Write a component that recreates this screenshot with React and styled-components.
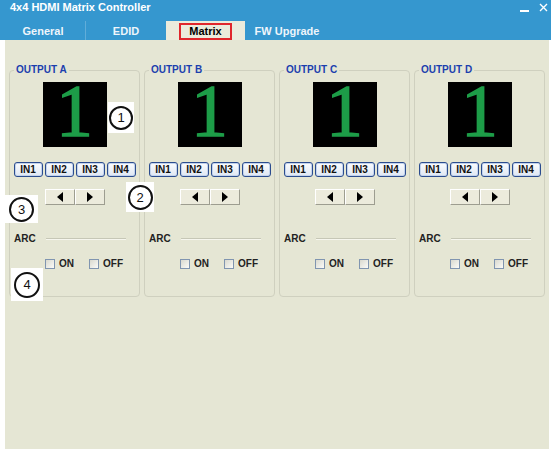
import React from 'react';
import styled, { createGlobalStyle } from 'styled-components';

const GlobalStyle = createGlobalStyle`
  html, body { margin: 0; padding: 0; background: #ffffff; }
  body { font-family: "Liberation Sans", Arial, sans-serif; }
  #root { width: 554px; height: 449px; overflow: hidden; }
`;

const Window = styled.div`
  position: relative;
  width: 551px;
  height: 449px;
  display: flex;
  flex-direction: column;
`;

const Header = styled.header`
  background: #3597cf;
  display: flex;
  flex-direction: column;
`;

const TitleRow = styled.div`
  height: 21px;
  display: flex;
  align-items: flex-start;
  justify-content: space-between;
  padding: 2px 3px 0 10px;
  box-sizing: border-box;
`;

const Title = styled.span`
  color: #ffffff;
  font-weight: bold;
  font-size: 11px;
  line-height: 11px;
`;

const Controls = styled.div`
  display: flex;
  align-items: flex-start;
  gap: 10px;
  padding-top: 1px;
`;

const TabBar = styled.nav`
  height: 19px;
  display: flex;
  align-items: stretch;
`;

const Tab = styled.div`
  width: ${p => p.$width}px;
  display: flex;
  align-items: center;
  justify-content: center;
  white-space: nowrap;
  font-weight: bold;
  font-size: 11px;
  color: ${p => (p.$active ? '#000000' : '#eef5fb')};
  background: ${p => (p.$active ? '#ebebdc' : 'transparent')};
  box-shadow: ${p => (p.$divider ? 'inset -1px 0 0 rgba(255,255,255,0.22)' : 'none')};
  padding-top: 2px;
  box-sizing: border-box;
`;

const TabLabel = styled.span`
  line-height: 11px;
  padding: ${p => (p.$marked ? '1px 8px' : '3px 0')};
  border: ${p => (p.$marked ? '2px solid #e0262c' : 'none')};
`;

const Body = styled.main`
  flex: 1;
  margin: 0 2px 0 5px;
  background: #e5e6d4;
  padding: 30px 0 0 4px;
  display: flex;
  align-items: flex-start;
  gap: 4px;
`;

const Group = styled.section`
  width: 131px;
  height: 227px;
  box-sizing: border-box;
  border: 1px solid #cfd0bf;
  border-radius: 4px;
  display: flex;
  flex-direction: column;
  align-items: center;
`;

const Legend = styled.span`
  align-self: flex-start;
  margin: -7px 0 0 4px;
  padding: 0 2px;
  background: #e5e6d4;
  color: #1c3fae;
  font-weight: bold;
  font-size: 10px;
  line-height: 12px;
`;

const Display = styled.div`
  margin-top: 6px;
  width: 64px;
  height: 65px;
  background: #000000;
  display: flex;
  align-items: center;
  justify-content: center;
  padding-bottom: 5px;
  box-sizing: border-box;
  color: #1d9d48;
  -webkit-text-stroke: 1.6px #1d9d48;
  font-family: "Liberation Serif", "Times New Roman", serif;
  font-size: 73px;
  line-height: 60px;
`;

const InputRow = styled.div`
  margin-top: 15px;
  display: flex;
  gap: 2px;
`;

const InputButton = styled.button`
  width: 29px;
  height: 15px;
  padding: 0;
  border: 1px solid #2b4c8e;
  border-radius: 3px;
  background: linear-gradient(#fbfcfe, #dfe7f3);
  box-shadow: inset 0 0 0 1px #c3d3ec;
  font-family: "Liberation Sans", Arial, sans-serif;
  font-weight: bold;
  font-size: 10px;
  line-height: 13px;
  color: #111111;
`;

const ArrowRow = styled.div`
  margin-top: 12px;
  display: flex;
`;

const ArrowButton = styled.button`
  width: 30px;
  height: 16px;
  padding: 0;
  border: 1px solid;
  border-color: #ffffff #9d9d90 #9d9d90 #ffffff;
  background: #ecebdc;
  display: flex;
  align-items: center;
  justify-content: center;
`;

const ArcRow = styled.div`
  align-self: stretch;
  margin-top: 27px;
  height: 12px;
  display: flex;
  align-items: center;
  padding: 0 13px 0 4px;
`;

const ArcLabel = styled.span`
  font-weight: bold;
  font-size: 10px;
  color: #222222;
`;

const Rule = styled.div`
  flex: 1;
  margin-left: 10px;
  height: 1px;
  background: #c6c7b6;
  box-shadow: 0 1px 0 #f6f6ee;
`;

const CheckRow = styled.div`
  align-self: stretch;
  margin-top: 14px;
  display: flex;
  align-items: center;
  padding-left: 35px;
  gap: 15px;
`;

const CheckItem = styled.label`
  display: flex;
  align-items: center;
  gap: 4px;
  font-weight: bold;
  font-size: 10px;
  color: #222222;
`;

const CheckBox = styled.span`
  width: 10px;
  height: 10px;
  box-sizing: border-box;
  border: 1px solid #8095b0;
  background: linear-gradient(135deg, #d9d9cf, #fbfbf8);
`;

const Callout = styled.div`
  position: absolute;
  background: #ffffff;
  display: flex;
  align-items: center;
  justify-content: center;
`;

const Circle = styled.span`
  width: ${p => p.$size}px;
  height: ${p => p.$size}px;
  box-sizing: border-box;
  border: 2px solid #111111;
  border-radius: 50%;
  display: flex;
  align-items: center;
  justify-content: center;
  font-size: 13px;
  color: #111111;
`;

const Triangle = ({ dir }) => (
  <svg width="6" height="10" viewBox="0 0 6 10">
    {dir === 'left' ? <polygon points="6,0 6,10 0,5" fill="#000" /> : <polygon points="0,0 0,10 6,5" fill="#000" />}
  </svg>
);

const outputs = ['A', 'B', 'C', 'D'];
const inputs = ['IN1', 'IN2', 'IN3', 'IN4'];

const tabs = [
  { label: 'General', width: 86 },
  { label: 'EDID', width: 80 },
  { label: 'Matrix', width: 79, active: true },
  { label: 'FW Upgrade', width: 84 },
];

const callouts = [
  { n: 1, left: 108, top: 102, w: 26, h: 31, size: 24 },
  { n: 2, left: 126, top: 182, w: 28, h: 30, size: 25 },
  { n: 3, left: 5, top: 195, w: 33, h: 28, size: 25 },
  { n: 4, left: 11, top: 268, w: 32, h: 33, size: 26 },
];

function OutputPanel({ name }) {
  return (
    <Group>
      <Legend>OUTPUT {name}</Legend>
      <Display>1</Display>
      <InputRow>
        {inputs.map(i => (
          <InputButton key={i}>{i}</InputButton>
        ))}
      </InputRow>
      <ArrowRow>
        <ArrowButton><Triangle dir="left" /></ArrowButton>
        <ArrowButton><Triangle dir="right" /></ArrowButton>
      </ArrowRow>
      <ArcRow>
        <ArcLabel>ARC</ArcLabel>
        <Rule />
      </ArcRow>
      <CheckRow>
        <CheckItem><CheckBox />ON</CheckItem>
        <CheckItem><CheckBox />OFF</CheckItem>
      </CheckRow>
    </Group>
  );
}

export default function App() {
  return (
    <>
      <GlobalStyle />
      <Window>
        <Header>
          <TitleRow>
            <Title>4x4 HDMI Matrix Controller</Title>
            <Controls>
              <svg width="9" height="10" viewBox="0 0 9 10">
                <rect x="0" y="7" width="9" height="2" fill="#fff" />
              </svg>
              <svg width="9" height="9" viewBox="0 0 9 9">
                <path d="M1 1 L8 8 M8 1 L1 8" stroke="#fff" strokeWidth="1.4" />
              </svg>
            </Controls>
          </TitleRow>
          <TabBar>
            {tabs.map((t, i) => (
              <Tab key={t.label} $width={t.width} $active={t.active} $divider={i === 0}>
                <TabLabel $marked={t.active}>{t.label}</TabLabel>
              </Tab>
            ))}
          </TabBar>
        </Header>
        <Body>
          {outputs.map(o => (
            <OutputPanel key={o} name={o} />
          ))}
        </Body>
        {callouts.map(c => (
          <Callout key={c.n} style={{ left: c.left, top: c.top, width: c.w, height: c.h }}>
            <Circle $size={c.size}>{c.n}</Circle>
          </Callout>
        ))}
      </Window>
    </>
  );
}
